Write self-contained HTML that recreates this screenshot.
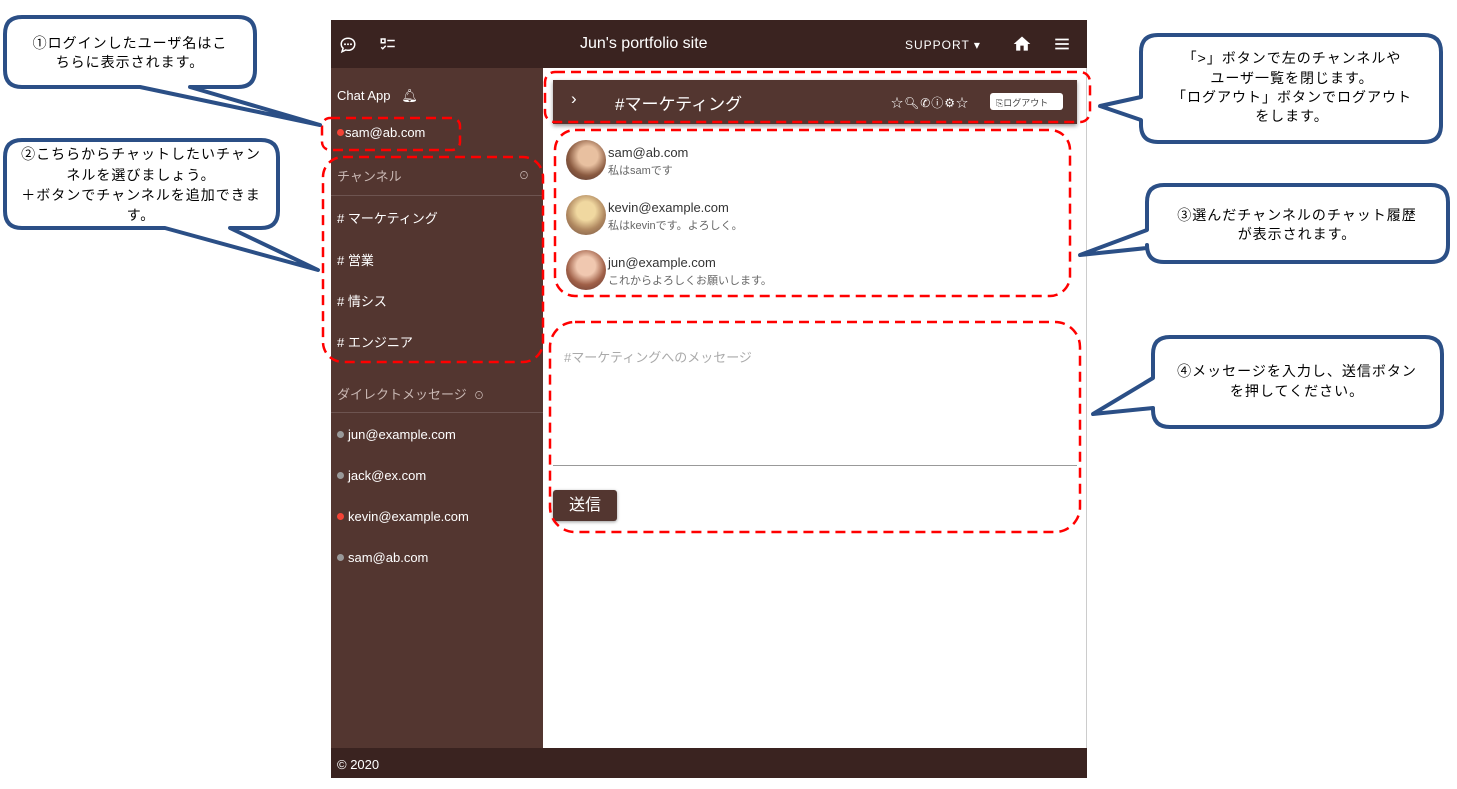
<!DOCTYPE html>
<html><head><meta charset="utf-8"><style>
*{margin:0;padding:0;box-sizing:border-box}
body{width:1457px;height:789px;background:#fff;position:relative;overflow:hidden;font-family:"Liberation Sans","Noto Sans CJK JP",sans-serif}
.a{position:absolute}
.hdr{left:331px;top:20px;width:756px;height:48px;background:#3a2320}
.side{left:331px;top:68px;width:212px;height:680px;background:#533630;color:#fff}
.foot{left:331px;top:748px;width:756px;height:30px;background:#3a2320;color:#fff;font-size:13px;padding:9px 6px}
.main{left:543px;top:68px;width:544px;height:680px;border-right:1px solid #ccc}
.s{font-size:13px;color:#fff;position:absolute;left:6px}
.g{color:#c9b8b4}
.dot{display:inline-block;width:7px;height:7px;border-radius:50%;margin-right:4px;vertical-align:1px}
.hr{position:absolute;left:0;width:212px;height:1px;background:#6d5450}
.msg{position:absolute;left:567px;font-size:13px;color:#333}
.av{position:absolute;left:-1px;width:40px;height:40px;border-radius:50%;background:radial-gradient(circle at 55% 40%,#e8c0a0 0 30%,#8a5a40 60%,#4a3030)}
.msg .n{position:absolute;left:41px;top:5px;white-space:nowrap}
.msg .t{position:absolute;left:41px;top:22px;font-size:11px;color:#666;white-space:nowrap}
</style></head><body>
<div class="a hdr">
<svg class="a" style="left:8px;top:16px" width="18" height="18" viewBox="0 0 24 24"><path d="M12 3C6.5 3 3 6.5 3 11c0 2 1 4 2.5 5.2L4 21l5-2.4c1 .3 2 .4 3 .4 5.5 0 9-3.5 9-8s-3.5-8-9-8z" fill="none" stroke="#fff" stroke-width="2"/><circle cx="8" cy="11" r="1.3" fill="#fff"/><circle cx="12" cy="11" r="1.3" fill="#fff"/><circle cx="16" cy="11" r="1.3" fill="#fff"/></svg>
<svg class="a" style="left:48px;top:16px" width="18" height="18" viewBox="0 0 24 24"><path d="M3 4h5v5H3zM11 6h10M11 14h10M3 15l2 2 4-4" fill="none" stroke="#fff" stroke-width="2"/></svg>
<div class="a" style="left:249px;top:15px;color:#fff;font-size:16px">Jun's portfolio site</div>
<div class="a" style="left:574px;top:18px;color:#fff;font-size:12px;letter-spacing:1px">SUPPORT ▾</div>
<svg class="a" style="left:681px;top:14px" width="20" height="20" viewBox="0 0 24 24"><path d="M10 20v-6h4v6h5v-8h3L12 3 2 12h3v8z" fill="#fff"/></svg>
<svg class="a" style="left:722px;top:15px" width="18" height="18" viewBox="0 0 24 24"><path d="M3 6h18M3 12h18M3 18h18" stroke="#fff" stroke-width="2.2"/></svg>
</div>
<div class="a side">
<div class="s" style="top:20px">Chat App &nbsp;&nbsp;<span style="font-size:13px">🔔︎</span></div>
<div class="s" style="top:57px"><span class="dot" style="background:#f44336;margin-right:1px"></span>sam@ab.com</div>
<div class="s g" style="top:98px">チャンネル</div><div class="a g" style="left:188px;top:99px;font-size:10px">⊙</div>
<div class="hr" style="top:127px"></div>
<div class="s" style="top:140px"># マーケティング</div>
<div class="s" style="top:182px"># 営業</div>
<div class="s" style="top:223px"># 情シス</div>
<div class="s" style="top:264px"># エンジニア</div>
<div class="s g" style="top:316px">ダイレクトメッセージ &nbsp;<span style="font-size:10px">⊙</span></div>
<div class="hr" style="top:344px"></div>
<div class="s" style="top:359px"><span class="dot" style="background:#999"></span>jun@example.com</div>
<div class="s" style="top:400px"><span class="dot" style="background:#999"></span>jack@ex.com</div>
<div class="s" style="top:441px"><span class="dot" style="background:#f44336"></span>kevin@example.com</div>
<div class="s" style="top:482px"><span class="dot" style="background:#999"></span>sam@ab.com</div>
</div>
<div class="a main"></div>
<div class="a" style="left:553px;top:80px;width:524px;height:44px;background:#533630;box-shadow:0 2px 4px rgba(0,0,0,.4);color:#fff">
<div class="a" style="left:18px;top:9px;font-size:17px">›</div>
<div class="a" style="left:62px;top:10px;font-size:17px">#マーケティング</div>
<div class="a" style="left:338px;top:14px;font-size:12px;letter-spacing:1px">☆🔍︎✆ⓘ⚙☆</div>
<div class="a" style="left:437px;top:13px;width:73px;height:17px;background:#fff;border-radius:3px;color:#444;font-size:9px;padding:3px 6px">⎘ログアウト</div>
</div>
<div class="msg" style="top:140px"><div class="av"></div><div class="n">sam@ab.com</div><div class="t">私はsamです</div></div>
<div class="msg" style="top:195px"><div class="av" style="background:radial-gradient(circle at 50% 40%,#f0d8a0 0 30%,#b08860 60%,#705040)"></div><div class="n">kevin@example.com</div><div class="t">私はkevinです。よろしく。</div></div>
<div class="msg" style="top:250px"><div class="av" style="background:radial-gradient(circle at 50% 40%,#f0c8b0 0 30%,#a06048 60%,#603830)"></div><div class="n">jun@example.com</div><div class="t">これからよろしくお願いします。</div></div>
<div class="a" style="left:553px;top:335px;width:524px;height:131px;border-bottom:1px solid #999;background:#fff">
<div class="a" style="left:11px;top:12px;font-size:13px;color:#aaa">#マーケティングへのメッセージ</div></div>
<div class="a" style="left:553px;top:490px;width:64px;height:31px;background:#533630;border-radius:3px;color:#fff;font-size:16px;text-align:center;line-height:31px;box-shadow:0 1px 3px rgba(0,0,0,.4)">送信</div>
<div class="a foot">© 2020</div>
<svg class="a" style="left:0;top:0" width="1457" height="789">
<g fill="none" stroke="#f00" stroke-width="2.5" stroke-dasharray="10 6">
<rect x="322" y="118" width="138" height="32" rx="8"/>
<rect x="323" y="157" width="220" height="205" rx="20"/>
<rect x="545" y="72" width="545" height="50" rx="10"/>
<rect x="555" y="130" width="515" height="166" rx="20"/>
<rect x="550" y="322" width="530" height="210" rx="25"/>
</g>
<g fill="#fff" stroke="#2b4f86" stroke-width="4" stroke-linejoin="round">
<path d="M22 17H238Q255 17 255 34V70Q255 87 238 87H190L320 125L140 87H22Q5 87 5 70V34Q5 17 22 17Z"/>
<path d="M22 140H261Q278 140 278 157V211Q278 228 261 228H230L318 270L165 228H22Q5 228 5 211V157Q5 140 22 140Z"/>
<path d="M1158 35H1424Q1441 35 1441 52V125Q1441 142 1424 142H1158Q1141 142 1141 125V120L1100 106L1141 97V52Q1141 35 1158 35Z"/>
<path d="M1164 185H1431Q1448 185 1448 202V245Q1448 262 1431 262H1164Q1147 262 1147 245V248L1080 255L1147 230V202Q1147 185 1164 185Z"/>
<path d="M1170 337H1425Q1442 337 1442 354V410Q1442 427 1425 427H1170Q1153 427 1153 410V408L1093 414L1153 378V354Q1153 337 1170 337Z"/>
</g>
<g font-size="14" fill="#000" text-anchor="middle" letter-spacing="1" font-family="Liberation Sans,Noto Sans CJK JP,sans-serif">
<text x="130" y="48">①ログインしたユーザ名はこ</text><text x="130" y="67">ちらに表示されます。</text>
<text x="141" y="159">②こちらからチャットしたいチャン</text><text x="141" y="180">ネルを選びましょう。</text><text x="141" y="200">＋ボタンでチャンネルを追加できま</text><text x="141" y="220">す。</text>
<text x="1292" y="63">「&gt;」ボタンで左のチャンネルや</text><text x="1292" y="83">ユーザ一覧を閉じます。</text><text x="1292" y="102">「ログアウト」ボタンでログアウト</text><text x="1292" y="121">をします。</text>
<text x="1297" y="220">③選んだチャンネルのチャット履歴</text><text x="1297" y="239">が表示されます。</text>
<text x="1297" y="376">④メッセージを入力し、送信ボタン</text><text x="1297" y="396">を押してください。</text>
</g>
</svg>
</body></html>
